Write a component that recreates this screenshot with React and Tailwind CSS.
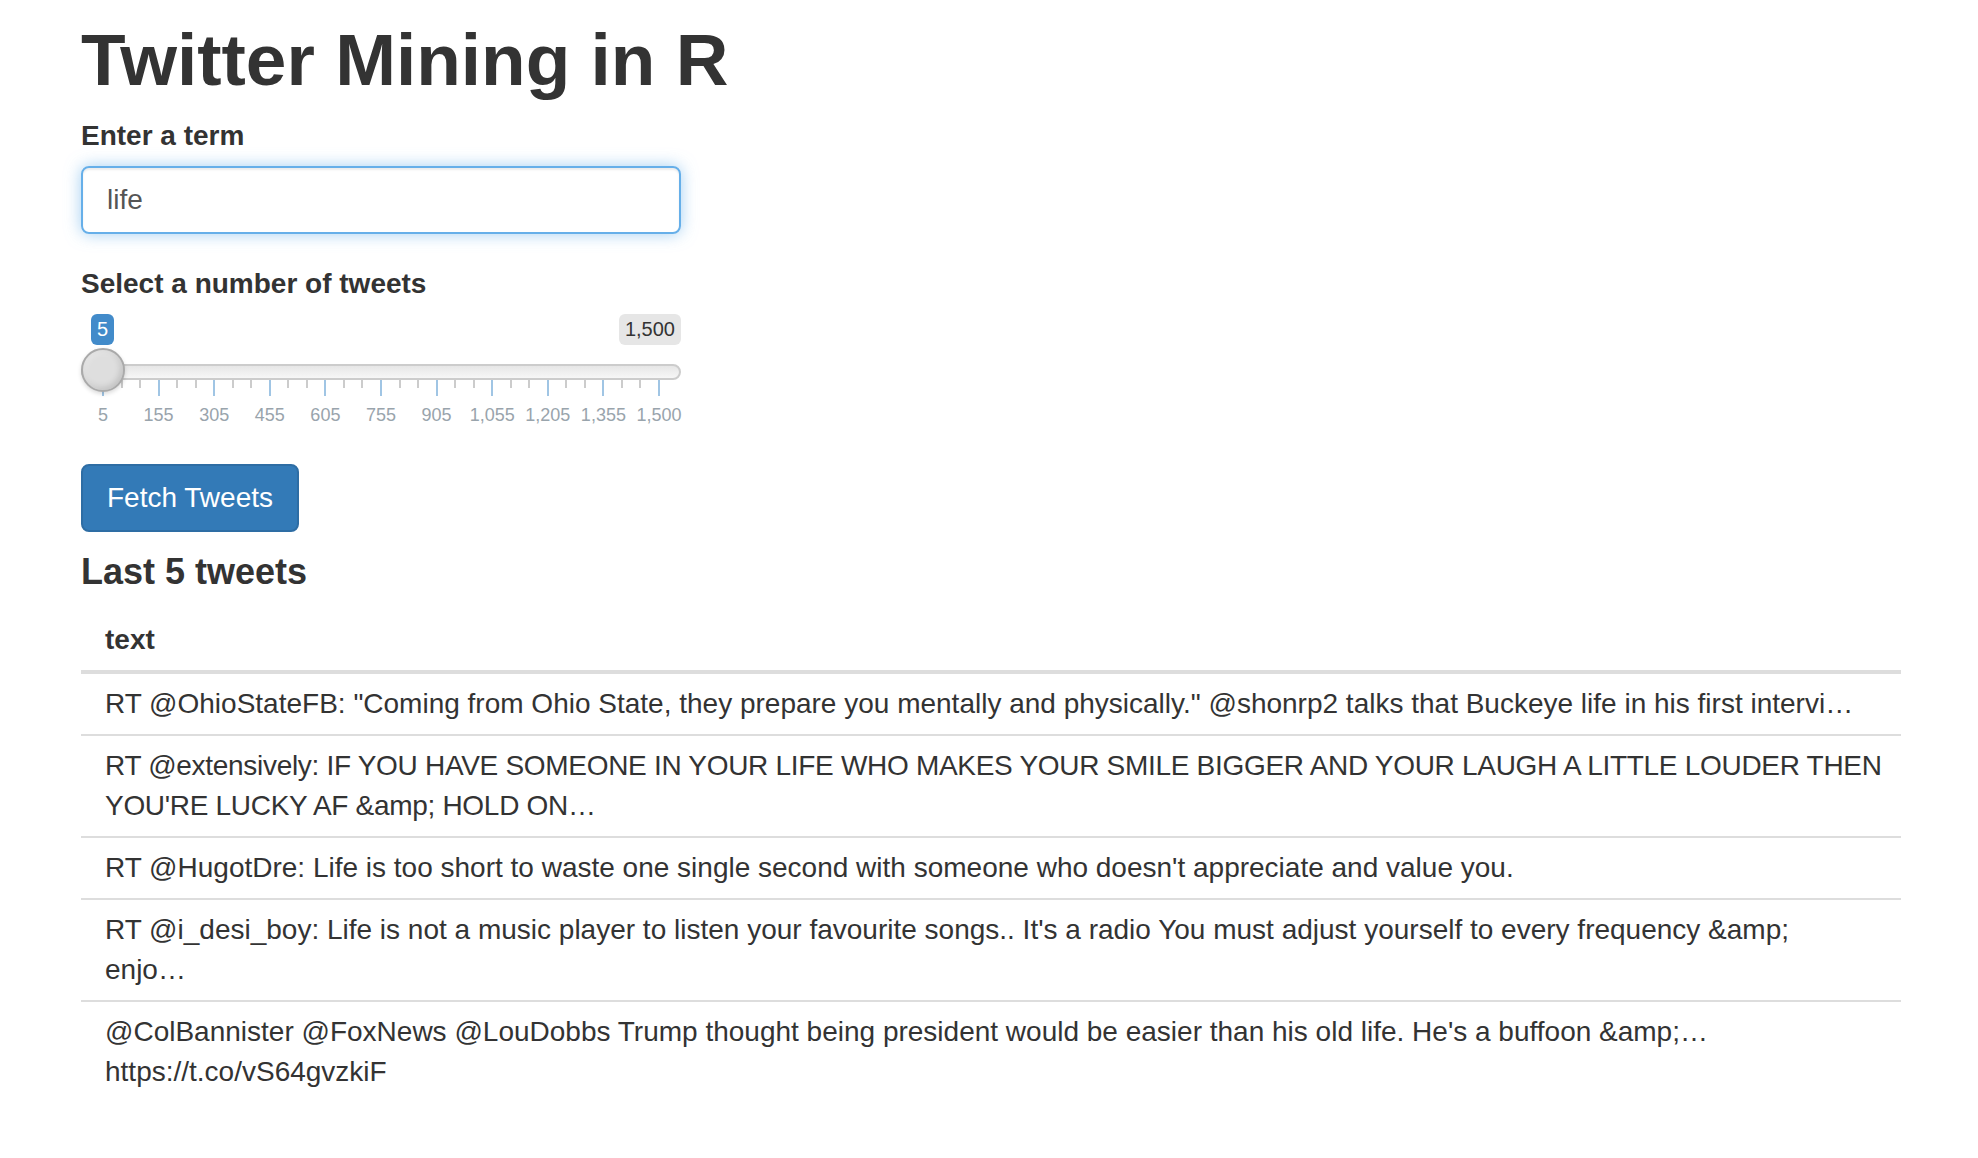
import React, { useState } from "react";

// each tweet is a list of lines; tight = the all-caps line set a little tighter
const tweets = [
  [
    {
      text: 'RT @OhioStateFB: "Coming from Ohio State, they prepare you mentally and physically." @shonrp2 talks that Buckeye life in his first intervi…',
    },
  ],
  [
    {
      text: "RT @extensively: IF YOU HAVE SOMEONE IN YOUR LIFE WHO MAKES YOUR SMILE BIGGER AND YOUR LAUGH A LITTLE LOUDER THEN",
      tight: true,
    },
    { text: "YOU'RE LUCKY AF &amp; HOLD ON…", tight: true },
  ],
  [
    {
      text: "RT @HugotDre: Life is too short to waste one single second with someone who doesn't appreciate and value you.",
    },
  ],
  [
    {
      text: "RT @i_desi_boy: Life is not a music player to listen your favourite songs.. It's a radio You must adjust yourself to every frequency &amp;",
    },
    { text: "enjo…" },
  ],
  [
    {
      text: "@ColBannister @FoxNews @LouDobbs Trump thought being president would be easier than his old life. He's a buffoon &amp;…",
    },
    { text: "https://t.co/vS64gvzkiF" },
  ],
];

const gridLabels = ["5", "155", "305", "455", "605", "755", "905", "1,055", "1,205", "1,355", "1,500"];

// ion.rangeSlider look-alike (shiny skin), drawn at 2x
const Slider = () => {
  const start = 22;
  const span = 556;
  const ticks = [];
  for (let k = 0; k <= 30; k++) {
    ticks.push({ x: start + (k * span) / 30, big: k % 3 === 0 });
  }

  return (
    <div className="relative h-[120px] w-[600px]">
      <div className="flex items-start justify-between">
        <span className="ml-[10px] rounded-[6px] bg-[#428bca] px-[6px] py-[2px] text-[20px] leading-[26.67px] text-white">
          5
        </span>
        <span className="rounded-[6px] bg-[#e6e6e6] px-[6px] py-[2px] text-[20px] leading-[26.67px] text-[#333]">
          1,500
        </span>
      </div>

      <div className="mt-[19px] h-[16px] rounded-[32px] border-2 border-[#ccc] bg-[linear-gradient(to_bottom,#dedede_-50%,#fff_150%)]"></div>

      <div className="absolute bottom-0 left-0 right-0 h-[54px]">
        {ticks.map((t, i) => (
          <div
            key={i}
            className={
              t.big
                ? "absolute top-0 h-[16px] w-[2px] bg-[#a0c5e4]"
                : "absolute top-0 h-[8px] w-[2px] bg-[#cccccc]"
            }
            style={{ left: t.x - 1 }}
          ></div>
        ))}
        {gridLabels.map((l, i) => (
          <span
            key={l}
            className="absolute bottom-[10px] -translate-x-1/2 whitespace-nowrap text-[18px] leading-[18px] text-[#99a4ac]"
            style={{ left: start + (i * span) / 10 }}
          >
            {l}
          </span>
        ))}
      </div>

      {/* handle */}
      <div className="absolute top-[34px] left-0 h-[44px] w-[44px] rounded-full border-2 border-[#aaa] bg-[#dedede] shadow-[inset_2px_2px_6px_rgba(255,255,255,0.3),inset_-2px_-2px_6px_rgba(0,0,0,0.15),0_2px_4px_rgba(0,0,0,0.15)]"></div>
    </div>
  );
};

const App = () => {
  const [term, setTerm] = useState("life");

  return (
    <div className="flex min-h-screen flex-col items-start bg-white pl-[81px] pr-[77px] pt-[20px] font-['Liberation_Sans',Arial,sans-serif] text-[28px] text-[#333]">
      <h1 className="mb-[17px] text-[73px] font-bold leading-[79px]">Twitter Mining in R</h1>

      <div className="mb-[30px] flex flex-col gap-[10px]">
        <label className="text-[28px] font-bold leading-[40px]">Enter a term</label>
        <input
          value={term}
          onChange={(e) => setTerm(e.target.value)}
          type="text"
          className="h-[68px] w-[600px] rounded-[8px] border-2 border-[#66afe9] px-[24px] text-[28px] text-[#555] shadow-[inset_0_2px_2px_rgba(0,0,0,0.075),0_0_16px_rgba(102,175,233,0.6)] outline-none"
        />
      </div>

      <div className="mb-[30px] flex flex-col gap-[10px]">
        <label className="text-[28px] font-bold leading-[40px]">Select a number of tweets</label>
        <Slider />
      </div>

      <button className="mb-[20px] h-[68px] rounded-[8px] border-2 border-[#2e6da4] bg-[#337ab7] px-[24px] text-[28px] leading-[40px] text-white">
        Fetch Tweets
      </button>

      <h4 className="mb-[18px] text-[36px] font-bold leading-[40px]">Last 5 tweets</h4>

      <table className="w-full table-fixed border-separate border-spacing-0 text-left">
        <thead>
          <tr>
            <th className="border-b-4 border-[#ddd] px-[24px] py-[10px] text-[28px] font-bold leading-[40px]">text</th>
          </tr>
        </thead>
        <tbody>
          {tweets.map((lines, i) => (
            <tr key={i}>
              <td
                className={
                  i === 0
                    ? "px-[24px] py-[10px] leading-[40px]"
                    : "border-t-2 border-[#ddd] px-[24px] py-[10px] leading-[40px]"
                }
              >
                {lines.map((line, j) => (
                  <div
                    key={j}
                    className={line.tight ? "whitespace-nowrap tracking-[-0.3px]" : "whitespace-nowrap"}
                  >
                    {line.text}
                  </div>
                ))}
              </td>
            </tr>
          ))}
        </tbody>
      </table>
    </div>
  );
};

export default App;
